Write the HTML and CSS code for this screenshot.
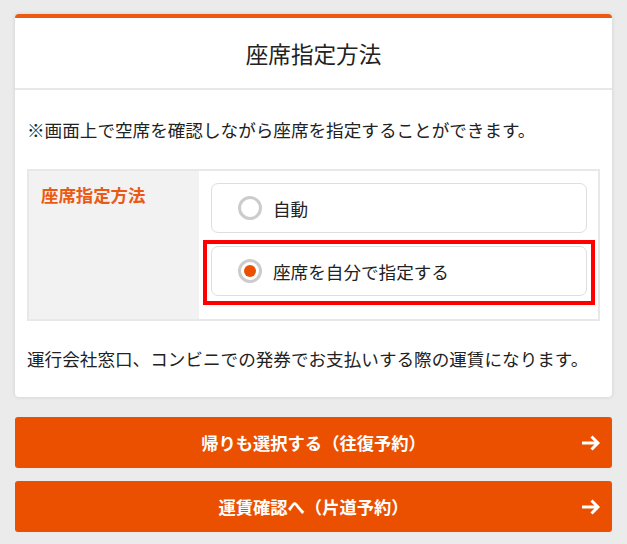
FILE: index.html
```html
<!DOCTYPE html>
<html lang="ja">
<head>
    <meta charset="UTF-8">
    <meta name="viewport" content="width=device-width, initial-scale=1.0">
    <title>座席指定方法</title>
    <link rel="stylesheet" href="styles.css">
</head>
<body>

<div class="card">
    <div class="card-head">座席指定方法</div>
    <div class="card-body">
        <p class="note">※画面上で空席を確認しながら座席を指定することができます。</p>

        <div class="seat-table">
            <div class="seat-label">座席指定方法</div>
            <div class="seat-options">
                <label class="option">
                    <span class="radio"></span>
                    <span>自動</span>
                </label>
                <label class="option checked">
                    <span class="radio"></span>
                    <span>座席を自分で指定する</span>
                    <span class="highlight"></span>
                </label>
            </div>
        </div>

        <p class="note fare">運行会社窓口、コンビニでの発券でお支払いする際の運賃になります。</p>
    </div>
</div>

<button class="next-btn">帰りも選択する（往復予約）
    <svg class="arrow" width="19" height="16" viewBox="0 0 19 16"><path d="M1 8H17M10.5 1.5L17 8L10.5 14.5" fill="none" stroke="#fff" stroke-width="3"/></svg>
</button>
<button class="next-btn">運賃確認へ（片道予約）
    <svg class="arrow" width="19" height="16" viewBox="0 0 19 16"><path d="M1 8H17M10.5 1.5L17 8L10.5 14.5" fill="none" stroke="#fff" stroke-width="3"/></svg>
</button>

</body>
</html>
```

FILE: styles.css
```css
body {
    margin: 0;
    padding: 14px 15px;
    background: #ebebeb;
    font-family: "Noto Sans CJK JP", sans-serif;
    color: #222;
}
.card {
    background: #fff;
    border-top: 4px solid #ec5a12;
    border-radius: 4px;
    box-shadow: 0 0 4px rgba(0, 0, 0, 0.12);
}
.card-head {
    height: 70px;
    display: flex;
    align-items: center;
    justify-content: center;
    font-size: 22.6px;
    border-bottom: 2px solid #e8e8e8;
}
.card-body {
    padding: 28px 12px 26px;
}
.note {
    margin: 0;
    font-size: 17.6px;
    line-height: 24px;
}
.seat-table {
    display: flex;
    margin-top: 27px;
    border: 2px solid #e8e8e8;
}
.seat-label {
    width: 146px;
    padding: 12px;
    background: #f2f2f2;
    color: #eb5a14;
    font-weight: bold;
    font-size: 17.4px;
    line-height: 24px;
}
.seat-options {
    flex: 1;
    display: flex;
    flex-direction: column;
    gap: 13px;
    padding: 12px 11px 23px 12px;
}
.option {
    position: relative;
    display: flex;
    align-items: center;
    gap: 11px;
    height: 48px;
    padding-left: 26px;
    border: 1px solid #dedede;
    border-radius: 7px;
    font-size: 17.6px;
}
.radio {
    width: 18px;
    height: 18px;
    border: 3px solid #ccc;
    border-radius: 50%;
    display: flex;
    align-items: center;
    justify-content: center;
}
.checked .radio::after {
    content: "";
    width: 12px;
    height: 12px;
    border-radius: 50%;
    background: #eb5000;
}
.highlight {
    position: absolute;
    top: -7px;
    left: -9px;
    right: -9px;
    bottom: -10px;
    border: 4px solid #f00;
}
.fare {
    margin-top: 26px;
}
.next-btn {
    display: flex;
    align-items: center;
    justify-content: center;
    position: relative;
    width: 100%;
    height: 51px;
    margin-top: 20px;
    border: none;
    border-radius: 3px;
    background: #eb5000;
    color: #fff;
    font-family: "Noto Sans CJK JP", sans-serif;
    font-size: 17.3px;
    font-weight: bold;
}
.next-btn + .next-btn {
    margin-top: 13px;
}
.arrow {
    position: absolute;
    right: 12px;
    top: 18px;
}
```
